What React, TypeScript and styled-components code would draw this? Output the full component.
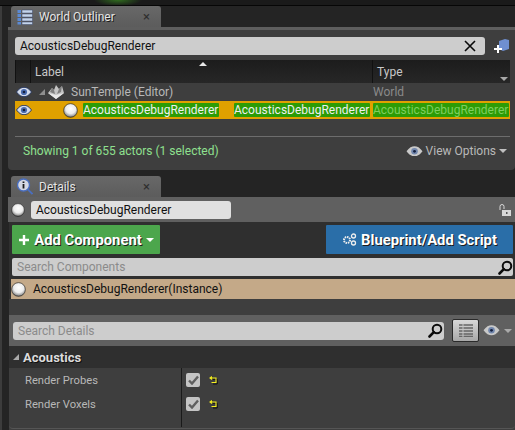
import React, { FC } from "react";
import styled, { createGlobalStyle } from "styled-components";

const GlobalStyle = createGlobalStyle`
  html, body {
    margin: 0;
    padding: 0;
    background: #242424;
  }
  body {
    font-family: Roboto, "Liberation Sans", sans-serif;
    font-size: 12px;
  }
`;

const Eye: FC<{ w?: number; dark?: boolean }> = ({ w = 16, dark }) => (
  <svg width={w} height={(w * 10) / 16} viewBox="0 0 16 10">
    <path d="M0.5 5C3 1.5 5.5 0.3 8 0.3S13 1.5 15.5 5C13 8.5 10.500 9.700 8 9.700S3 8.500 0.500 5Z" fill={dark ? "#d4dcec" : "#c9c9c9"} stroke={dark ? "#1c2c58" : "none"} strokeWidth="0.900" />
    <circle cx="8" cy="5" r="3.100" fill={dark ? "#4a6cb0" : "#7287ad"} />
    <circle cx="8" cy="5" r="1.300" fill="#14203f" />
  </svg>
);

const Sphere: FC<{ size?: number; id: string }> = ({ size = 14, id }) => (
  <svg width={size} height={size} viewBox="0 0 14 14">
    <defs>
      <radialGradient id={id} cx="52%" cy="36%" r="66%">
        <stop offset="0%" stopColor="#ffffff" />
        <stop offset="55%" stopColor="#ececec" />
        <stop offset="82%" stopColor="#a2a2a2" />
        <stop offset="100%" stopColor="#3c3c3c" />
      </radialGradient>
    </defs>
    <circle cx="7" cy="7" r="6.400" fill={`url(#${id})`} stroke="#222" strokeWidth="0.600" />
  </svg>
);

const Magnifier: FC = () => (
  <svg width="15" height="15" viewBox="0 0 15 15">
    <circle cx="9" cy="6" r="4.300" fill="none" stroke="#0c0c0c" strokeWidth="2" />
    <path d="M5.800 9.200 1.500 13.500" stroke="#0c0c0c" strokeWidth="2.600" strokeLinecap="round" />
  </svg>
);

const Reset: FC = () => (
  <svg width="9" height="9" viewBox="0 0 9 9">
    <path d="M3.500 2 2.500 3 1 2 3.500 0.500 M3.800 3.300H8.200V8H4" fill="none" stroke="#111" strokeWidth="1" />
    <path d="M3 0.500 1 2 3 3.500M1.500 2H7V6.500H2.500" fill="none" stroke="#f5f020" strokeWidth="1.100" />
  </svg>
);

const Check: FC = () => (
  <CheckBox>
    <svg width="11" height="10" viewBox="0 0 11 10">
      <path d="M1 5.500 4 8.500 10 1.500" fill="none" stroke="#5f5f5f" strokeWidth="2.400" />
    </svg>
  </CheckBox>
);

const Page = styled.div`
  width: 515px;
  height: 430px;
  overflow: hidden;
  background: #242424;
  display: flex;
  box-sizing: border-box;
`;

const SideStrip = styled.div`
  width: 2px;
  margin-right: 6px;
  background: #3c3c3c;
  flex: none;
`;

const Column = styled.div`
  flex: 1;
  min-width: 0;
  display: flex;
  flex-direction: column;
`;

const TopEdge = styled.div`
  height: 6px;
  flex: none;
  margin-left: -8px;
  background: radial-gradient(ellipse 24px 6px at 118px 0, #2f6b1e 0, #1a1a1a 100%);
  border-bottom: 1px solid #060606;
  box-sizing: border-box;
`;

const TabRow = styled.div`
  height: 21px;
  flex: none;
  padding-left: 3px;
  display: flex;
`;

const Tab = styled.div`
  width: 150px;
  background: linear-gradient(#686868, #5c5c5c);
  border-radius: 3px 3px 0 0;
  display: flex;
  align-items: center;
  color: #e4e4e4;
  font-size: 12px;
  box-sizing: border-box;
  padding: 0 0 0 6px;
  gap: 6px;
  text-shadow: 1px 1px 0 #1d1d1d;
`;

const TabLabel = styled.span`
  flex: 1;
`;

const TabClose = styled.span`
  width: 18px;
  color: #2e2e2e;
  font-size: 13px;
  text-shadow: none;
`;

const OutlinerPanel = styled.section`
  height: 143px;
  flex: none;
  background: #3e3e3e;
  border-top: 3px solid #5e5e5e;
  border-radius: 0 0 4px 4px;
  box-sizing: border-box;
  padding: 7px 5px 0 7px;
  display: flex;
  flex-direction: column;
`;

const FilterRow = styled.div`
  height: 18px;
  display: flex;
  align-items: center;
  gap: 9px;
`;

const TextBox = styled.div<{ $light?: boolean; $hint?: boolean }>`
  flex: 1;
  height: 18px;
  background: ${(p) => (p.$light ? "#e0e0e0" : "#cdcdcd")};
  border-radius: 3px;
  color: ${(p) => (p.$hint ? "#8b8b8b" : "#111")};
  display: flex;
  align-items: center;
  justify-content: space-between;
  padding: 0 5px;
  box-sizing: border-box;
  font-size: 12px;
  white-space: nowrap;
`;

const ClearX = styled.span`
  width: 12px;
  height: 12px;
  margin-right: 4px;
  display: flex;
`;

const HeaderRow = styled.div`
  margin-top: 5px;
  height: 23px;
  background: linear-gradient(#1c1c1c, #272727);
  display: grid;
  grid-template-columns: 15px 342px 1fr;
  color: #c8c8c8;
  font-size: 12px;
`;

const HeaderCell = styled.div`
  position: relative;
  display: flex;
  align-items: center;
  padding-left: 4px;
  border-left: 1px solid #111;
`;

const SortUp = styled.span`
  position: absolute;
  left: 168px;
  top: 2px;
  border-left: 4px solid transparent;
  border-right: 4px solid transparent;
  border-bottom: 4px solid #e8e8e8;
`;

const ColumnMenu = styled.span`
  position: absolute;
  right: 2px;
  bottom: 2px;
  border-left: 4px solid transparent;
  border-right: 4px solid transparent;
  border-top: 4px solid #a8a8a8;
`;

const TreeRow = styled.div`
  height: 18px;
  display: flex;
  align-items: center;
  color: #b8b8b8;
`;

const EyeCell = styled.div`
  width: 23px;
  display: flex;
  padding-left: 1px;
  flex: none;
`;

const Arrow = styled.span`
  width: 0;
  height: 0;
  border-style: solid;
  border-width: 0 0 6px 6px;
  border-color: transparent transparent #8f8f8f transparent;
  margin-right: 2px;
`;

const MapIcon = styled.svg`
  margin-right: 6px;
  flex: none;
`;

const TreeName = styled.span`
  width: 302px;
`;

const TypeCell = styled.span`
  color: #8a8a8a;
`;

const SelectedRow = styled.div`
  height: 18px;
  background: #e0a100;
  display: flex;
  align-items: center;
  white-space: nowrap;
`;

const Spacer = styled.div<{ $w: number }>`
  width: ${(p) => p.$w}px;
  flex: none;
  display: flex;
`;

const Match = styled.span<{ $w: number; $dim?: boolean }>`
  width: ${(p) => p.$w}px;
  flex: none;
  height: 14px;
  line-height: 14px;
  background: #2c9c05;
  color: ${(p) => (p.$dim ? "#7fcf5f" : "#f0f0f0")};
  overflow: hidden;
  border-radius: 1px;
`;

const Footer = styled.div`
  margin-top: 17px;
  margin-right: 0;
  border-top: 1px solid #6d6d6d;
  height: 28px;
  display: flex;
  align-items: center;
  justify-content: space-between;
  padding: 0 3px 0 8px;
  color: #8fe08f;
`;

const ViewOptions = styled.div`
  display: flex;
  align-items: center;
  gap: 3px;
  color: #b9b9b9;
`;

const Caret = styled.span<{ $c?: string }>`
  width: 0;
  height: 0;
  border-left: 4px solid transparent;
  border-right: 4px solid transparent;
  border-top: 4px solid ${(p) => p.$c || "#c0c0c0"};
`;

const Gap = styled.div`
  height: 6px;
  flex: none;
`;

const DetailsPanel = styled.section`
  flex: 1;
  display: flex;
  flex-direction: column;
  min-height: 0;
`;

const NameBar = styled.div`
  height: 25px;
  flex: none;
  background: #606060;
  display: flex;
  align-items: center;
  padding: 0 0 0 3px;
  gap: 6px;
`;

const NameBox = styled(TextBox)`
  flex: none;
  width: 200px;
`;

const LockIcon = styled.svg`
  margin-left: auto;
  margin-right: 3px;
`;

const ActorPanel = styled.div`
  height: 77px;
  flex: none;
  background: #2f2f2f;
  margin-left: 1px;
  padding: 3px 0 0 3px;
  box-sizing: border-box;
  display: flex;
  flex-direction: column;
`;

const Buttons = styled.div`
  height: 29px;
  display: flex;
  justify-content: space-between;
  padding-right: 2px;
`;

const BigButton = styled.div<{ $bg: string; $w: number }>`
  width: ${(p) => p.$w}px;
  background: ${(p) => p.$bg};
  color: #fff;
  font-weight: 700;
  font-size: 14.8px;
  display: flex;
  align-items: center;
  justify-content: center;
  gap: 4px;
  box-sizing: border-box;
  border-radius: 1px;
  text-shadow: 1px 1px 0 #1c1c1c;
`;

const ComponentSearch = styled(TextBox)`
  flex: none;
  margin: 4px 2px 3px 0;
  padding-right: 0;
  border-radius: 2px;
`;

const Instance = styled.div`
  height: 20px;
  background: #c4a988;
  display: flex;
  align-items: center;
  gap: 7px;
  color: #111;
  margin-left: -1px;
`;

const PropertyPanel = styled.div`
  flex: 1;
  background: #3e3e3e;
  margin-left: 1px;
  display: flex;
  flex-direction: column;
  min-height: 0;
`;

const DarkSpace = styled.div`
  height: 16px;
  flex: none;
`;

const SearchBar = styled.div`
  height: 31px;
  flex: none;
  background: #606060;
  display: flex;
  align-items: center;
  padding: 0 0 0 4px;
`;

const DetailsSearch = styled(TextBox)`
  flex: none;
  width: 431px;
  padding-right: 1px;
`;

const GridButton = styled.div`
  width: 27px;
  height: 23px;
  margin-left: 8px;
  background: linear-gradient(#d8d8d8, #a8a8a8);
  border: 1px solid #2a2a2a;
  border-radius: 2px;
  box-sizing: border-box;
  display: flex;
  align-items: center;
  justify-content: center;
`;

const EyeMenu = styled.div`
  margin-left: 4px;
  display: flex;
  align-items: center;
  gap: 4px;
`;

const Section = styled.div`
  height: 22px;
  flex: none;
  background: #2f2f2f;
  display: flex;
  align-items: center;
  padding-left: 4px;
  gap: 4px;
  color: #dcdcdc;
  font-weight: 700;
  font-size: 13px;
  text-shadow: 1px 1px 0 #111;
`;

const SectionArrow = styled(Arrow)`
  margin-right: 0;
  border-bottom-color: #aaa;
`;

const PropertyRows = styled.div`
  height: 60px;
  border-bottom: 1px solid #555;
  border-radius: 0 0 4px 4px;
  display: grid;
  grid-template-columns: 172px 1fr;
  grid-auto-rows: 24px;
  box-sizing: content-box;
`;

const PropName = styled.div`
  display: flex;
  align-items: center;
  padding-left: 16px;
  color: #b8b8b8;
  font-size: 11.2px;
`;

const PropValue = styled.div`
  border-left: 1px solid #1a1a1a;
  display: flex;
  align-items: center;
  padding-left: 4px;
  gap: 9px;
`;

const RowFill = styled(PropValue)`
  grid-column: 2;
  height: 11px;
`;

const CheckBox = styled.span`
  width: 14px;
  height: 14px;
  background: #c4c4c4;
  border-radius: 2px;
  display: flex;
  align-items: center;
  justify-content: center;
`;

export default function App() {
  return (
    <Page>
      <GlobalStyle />
      <SideStrip />
      <Column>
        <TopEdge />
        <TabRow>
          <Tab>
            <svg width="16" height="16" viewBox="0 0 16 16">
              <path d="M0.500 1h3.500v3H0.500zM0.500 5h3.500v3H0.500zM0.500 9h3.500v3H0.500zM0.500 13h3.500v2.500H0.500z" fill="#5b8ad4" />
              <path d="M5 1h10.500v3H5zM5 5h10.500v3H5zM5 9h10.500v3H5zM5 13h10.500v2.500H5z" fill="#c4d4ea" stroke="#39476a" strokeWidth="0.500" />
            </svg>
            <TabLabel>World Outliner</TabLabel>
            <TabClose>×</TabClose>
          </Tab>
        </TabRow>
        <OutlinerPanel>
          <FilterRow>
            <TextBox>
              AcousticsDebugRenderer
              <ClearX>
                <svg width="12" height="12" viewBox="0 0 12 12">
                  <path d="M1 1 11 11M11 1 1 11" stroke="#0a0a0a" strokeWidth="1.600" />
                </svg>
              </ClearX>
            </TextBox>
            <svg width="16" height="16" viewBox="0 0 16 16">
              <path d="M5 3 11 1 15 2V11L9 13 5 11Z" fill="#6f8fd0" />
              <path d="M4 7V15M0 11H8" stroke="#fff" strokeWidth="2" />
            </svg>
          </FilterRow>
          <HeaderRow>
            <HeaderCell />
            <HeaderCell>
              Label
              <SortUp />
            </HeaderCell>
            <HeaderCell>
              Type
              <ColumnMenu />
            </HeaderCell>
          </HeaderRow>
          <TreeRow>
            <EyeCell>
              <Eye dark />
            </EyeCell>
            <Spacer $w={8}>
              <Arrow />
            </Spacer>
            <MapIcon width="18" height="16" viewBox="0 0 18 16">
              <path d="M1 9 5 4 7 6 9 1 12 5 15 2 17 9 9 15Z" fill="#c4c4c4" />
              <path d="M1 9 9 15 17 9 9 11Z" fill="#e8e8e8" />
              <path d="M5 4 7 6 8 10 3 8ZM12 5 15 2 14 8 10 10Z" fill="#7e7e7e" />
            </MapIcon>
            <TreeName>SunTemple (Editor)</TreeName>
            <TypeCell>World</TypeCell>
          </TreeRow>
          <SelectedRow>
            <EyeCell>
              <Eye dark />
            </EyeCell>
            <Spacer $w={24} />
            <Sphere size={15} id="ball-actor" />
            <Spacer $w={5} />
            <Match $w={136}>AcousticsDebugRenderer</Match>
            <Spacer $w={15} />
            <Match $w={136}>AcousticsDebugRenderer</Match>
            <Spacer $w={3} />
            <Match $w={136} $dim>AcousticsDebugRenderer</Match>
          </SelectedRow>
          <Footer>
            Showing 1 of 655 actors (1 selected)
            <ViewOptions>
              <Eye w={17} />
              View Options
              <Caret />
            </ViewOptions>
          </Footer>
        </OutlinerPanel>
        <Gap />
        <TabRow>
          <Tab>
            <svg width="16" height="17" viewBox="0 0 16 17">
              <circle cx="6.500" cy="7" r="6" fill="#d4d8e4" stroke="#4a6fc0" strokeWidth="1.400" />
              <path d="M10.800 11.300 15.500 16" stroke="#4a6fc0" strokeWidth="1.800" />
              <path d="M6.500 3.500v1.400M6.500 6v4.500" stroke="#1c1c1c" strokeWidth="1.800" />
            </svg>
            <TabLabel>Details</TabLabel>
            <TabClose>×</TabClose>
          </Tab>
        </TabRow>
        <DetailsPanel>
          <NameBar>
            <Sphere size={14} id="ball-name" />
            <NameBox $light>AcousticsDebugRenderer</NameBox>
            <LockIcon width="14" height="14" viewBox="0 0 14 14">
              <path d="M2 7V3.500a2 2 0 0 1 4 0V6" fill="none" stroke="#d8d8d8" strokeWidth="1" />
              <rect x="4" y="7" width="9" height="6" fill="#d8d8d8" />
              <rect x="8" y="9" width="1.500" height="2" fill="#555" />
            </LockIcon>
          </NameBar>
          <ActorPanel>
            <Buttons>
              <BigButton $bg="#4ca64c" $w={148}>
                <svg width="12" height="12" viewBox="0 0 12 12">
                  <path d="M6 1V11M1 6H11" stroke="#fff" strokeWidth="2.400" />
                </svg>
                Add Component
                <Caret $c="#fff" />
              </BigButton>
              <BigButton $bg="#2a6ea8" $w={187}>
                <svg width="15" height="13" viewBox="0 0 15 13">
                  <circle cx="5" cy="7" r="3" fill="none" stroke="#eee" strokeWidth="2" strokeDasharray="1.500 0.800" />
                  <circle cx="11.500" cy="3" r="2" fill="none" stroke="#eee" strokeWidth="1.300" />
                  <circle cx="11.500" cy="10" r="2" fill="none" stroke="#eee" strokeWidth="1.300" />
                </svg>
                Blueprint/Add Script
              </BigButton>
            </Buttons>
            <ComponentSearch $hint>
              Search Components
              <Magnifier />
            </ComponentSearch>
            <Instance>
              <Sphere size={15} id="ball-instance" />
              AcousticsDebugRenderer(Instance)
            </Instance>
          </ActorPanel>
          <PropertyPanel>
            <DarkSpace />
            <SearchBar>
              <DetailsSearch $hint>
                Search Details
                <Magnifier />
              </DetailsSearch>
              <GridButton>
                <svg width="14" height="13" viewBox="0 0 14 13">
                  <path d="M0 1H14M0 4H14M0 7H14M0 10H14M0 12.500H14" stroke="#666" strokeWidth="1.500" />
                  <path d="M4 0V13" stroke="#c4c4c4" strokeWidth="1" />
                </svg>
              </GridButton>
              <EyeMenu>
                <Eye w={17} />
                <Caret $c="#aaa" />
              </EyeMenu>
            </SearchBar>
            <Section>
              <SectionArrow />
              Acoustics
            </Section>
            <PropertyRows>
              <PropName>Render Probes</PropName>
              <PropValue>
                <Check />
                <Reset />
              </PropValue>
              <PropName>Render Voxels</PropName>
              <PropValue>
                <Check />
                <Reset />
              </PropValue>
              <RowFill />
            </PropertyRows>
          </PropertyPanel>
        </DetailsPanel>
      </Column>
    </Page>
  );
}
